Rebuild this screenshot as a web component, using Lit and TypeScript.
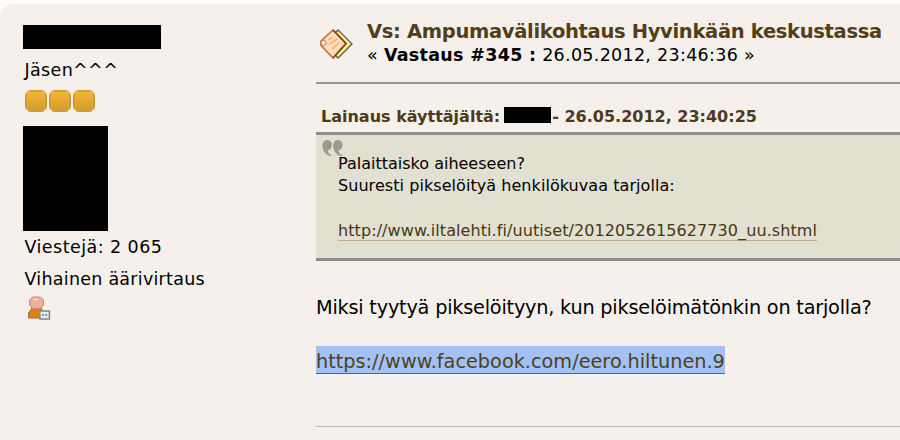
import { LitElement, html, css, svg } from "lit";
import { customElement } from "lit/decorators.js";

@customElement("app-root")
export class AppRoot extends LitElement {
  static styles = css`
    :host { display: flow-root; width: 900px; height: 440px; background: #fdfdfc; overflow: hidden;
      font-family: "DejaVu Sans", Verdana, sans-serif; color: #000; white-space: nowrap;
      font-variant-ligatures: none; }
    .post { box-sizing: border-box; height: 436px; margin-top: 4px; width: 920px; background: #f5f0ec;
      border-radius: 14px 0 0 0; display: flex; }
    .author { box-sizing: border-box; width: 316px; padding: 21px 0 0 23px; flex: none; }
    .name { width: 138px; height: 24px; background: #000; }
    .rank, .count, .motto { padding-left: 1.5px; line-height: 32px; font-size: 17.5px; }
    .rank { margin-top: 5px; height: 32px; letter-spacing: 0.35px; }
    .count { letter-spacing: 0.45px; }
    .motto { letter-spacing: 0.25px; }
    .stars { display: flex; gap: 2px; padding: 4px 0 0 2px; height: 22px; }
    .avatar { margin-top: 14px; width: 85px; height: 105px; background: #000; }
    .im { margin: 1px 0 0 4px; display: block; }
    .main { flex: 1; min-width: 0; }
    .head { display: flex; height: 78px; border-bottom: 2px solid #989595; }
    .topic { margin: 25px 0 0 4px; flex: none; }
    .titles { padding: 16px 0 0 13px; }
    .title { font-size: 19.5px; line-height: 24px; font-weight: bold; color: #513e1a; letter-spacing: -0.32px; }
    .sub { font-size: 17.5px; line-height: 23px; letter-spacing: 0.3px; }
    .qhead { display: flex; align-items: center; padding: 20px 0 0 5px; height: 24px; margin-bottom: 4px;
      font-size: 16px; font-weight: bold; color: #4c3a18; line-height: 24px; }
    .qhead span:not(.mask) { padding-top: 2px; }
    .mask { width: 47px; height: 16px; background: #000; margin: 0 1px 3px 4px; }
    .quote { box-sizing: border-box; height: 129px; background: #e1e0d1; border: solid #8d8d8b;
      border-width: 3px 0; padding: 18px 0 0 22px; font-size: 16px; line-height: 22.3px; position: relative; }
    .marks { position: absolute; left: 6px; top: 5px; }
    .ql2 { letter-spacing: 0.06px; }
    .qlink { display: inline-block; height: 20px; border-bottom: 1px solid #c4a98b; color: #463718; letter-spacing: 0.08px; }
    .body { margin-top: 32px; font-size: 19.3px; line-height: 30px; letter-spacing: -0.22px; }
    .sel { display: inline-block; box-sizing: border-box; margin-top: 23px; height: 28px; background: #a1c1f7;
      border-bottom: 1px solid #4d6690; color: #513e1a; font-size: 19.3px; line-height: 31px; }
    .end { margin-top: 52px; height: 1px; background: #b9b9b5; }
  `;

  private star() {
    return svg`<svg width="22" height="22" viewBox="0 0 22 22">
      <defs><linearGradient id="g" x1="0" y1="0" x2="0" y2="1"><stop offset="0" stop-color="#f9b637"/><stop offset="1" stop-color="#cf9a30"/></linearGradient></defs>
      <path d="M4 .8H18L21.2 4V18L18 21.2H4L.8 18V4Z" fill="url(#g)" stroke="#d9a646" stroke-width="1.2"/>
      <path d="M5 .8H17M5 21.2H17M.8 5V17M21.2 5V17" stroke="#c48e2d" stroke-width="1"/></svg>`;
  }

  render() {
    return html`<div class="post">
      <div class="author">
        <div class="name"></div>
        <div class="rank">Jäsen^^^</div>
        <div class="stars">${[0, 1, 2].map(() => this.star())}</div>
        <div class="avatar"></div>
        <div class="count">Viestejä: 2 065</div>
        <div class="motto">Vihainen äärivirtaus</div>
        <svg class="im" width="25" height="25" viewBox="0 0 25 25">
          <path d="M1.5 22V17L5 12H14L17 16V22Z" fill="#de820f" stroke="#a96a2a"/>
          <path d="M5.5 1H13.5L16.5 4V9L13.5 12.5H5.5L2.5 9V4Z" fill="#e9b09a" stroke="#c98f7c"/>
          <path d="M6 3.5H11" stroke="#f4cdbb" stroke-width="2"/>
          <rect x="12.8" y="15" width="9.6" height="8" fill="#e8ecec" stroke="#858b8b" stroke-width="1.6"/>
          <path d="M15 19H17M18.3 19H20.3" stroke="#8b9494" stroke-width="2"/>
        </svg>
      </div>
      <div class="main">
        <div class="head">
          <svg class="topic" width="34" height="31" viewBox="0 0 34 31">
            <path d="M18 1L32 15L18 29L9 20V10Z" fill="#f3ea72" stroke="#5e5c4c" stroke-width="1.3"/>
            <path d="M19 4L29 14.5L18.5 26" fill="none" stroke="#fbf7a5" stroke-width="1.5"/>
            <path d="M13 1L26 14.5L13 29L1 16.5V12Z" fill="#fbdcc0" stroke="#c1743c" stroke-width="1.6"/>
            <path d="M13 1L26 14.5L13 29" fill="none" stroke="#8a4116" stroke-width="1.7"/>
            <path d="M1 12L4.5 11L6.5 15L2 17Z" fill="#fff0e4" stroke="#c47943"/>
            <path d="M8.5 11L13 8M9 15.5L17 10M12 20L19 14" stroke="#edb25f" stroke-width="1.5"/>
          </svg>
          <div class="titles">
            <div class="title">Vs: Ampumavälikohtaus Hyvinkään keskustassa</div>
            <div class="sub">« <b>Vastaus #345 :</b> 26.05.2012, 23:46:36 »</div>
          </div>
        </div>
        <div class="qhead"><span>Lainaus käyttäjältä:</span><span class="mask"></span><span>- 26.05.2012, 23:40:25</span></div>
        <div class="quote">
          <svg class="marks" width="21" height="17" viewBox="0 0 21 17">
            <g fill="#9a998b"><path id="m" d="M5.3 0C8.3 0 9.8 2.2 9.8 5C9.8 8 8 10 5.8 10.3C5.8 12.8 7.5 14.3 9.5 15L9 16C4.5 15.5 .5 12 .5 5.5C.5 2.2 2.5 0 5.3 0Z"/><use href="#m" x="10.7"/></g>
          </svg>
          <div>Palaittaisko aiheeseen?</div>
          <div class="ql2">Suuresti pikselöityä henkilökuvaa tarjolla:</div>
          <div><br></div>
          <div><span class="qlink">http://www.iltalehti.fi/uutiset/2012052615627730_uu.shtml</span></div>
        </div>
        <div class="body">Miksi tyytyä pikselöityyn, kun pikselöimätönkin on tarjolla?</div>
        <div><span class="sel">https://www.facebook.com/eero.hiltunen.9</span></div>
        <div class="end"></div>
      </div>
    </div>`;
  }
}
